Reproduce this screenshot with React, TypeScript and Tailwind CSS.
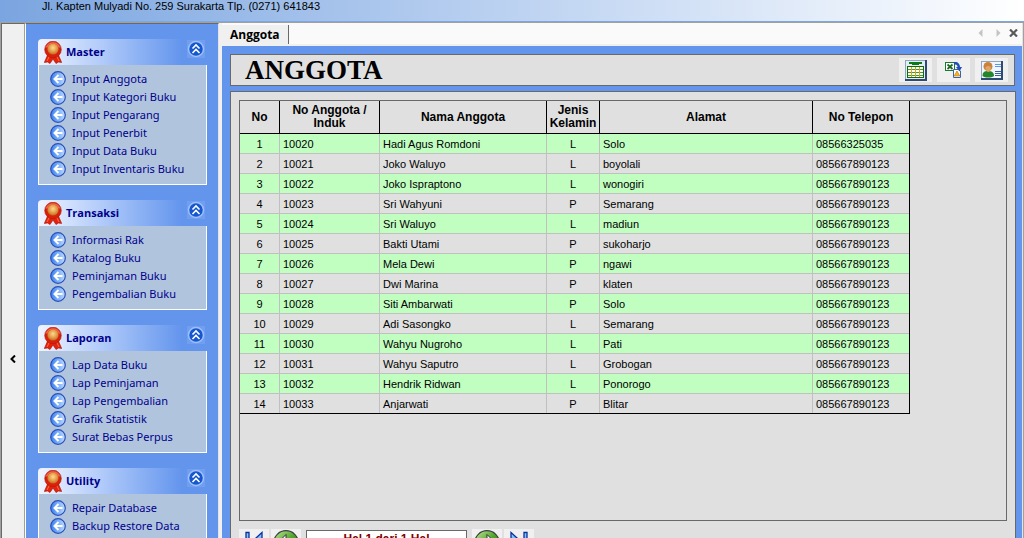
import type { ReactNode } from 'react';

interface Member {
  id: string;
  name: string;
  gender: 'L' | 'P';
  address: string;
  phone: string;
}

const MENU_GROUPS = [
  {
    title: 'Master',
    items: [
      'Input Anggota',
      'Input Kategori Buku',
      'Input Pengarang',
      'Input Penerbit',
      'Input Data Buku',
      'Input Inventaris Buku',
    ],
  },
  {
    title: 'Transaksi',
    items: ['Informasi Rak', 'Katalog Buku', 'Peminjaman Buku', 'Pengembalian Buku'],
  },
  {
    title: 'Laporan',
    items: [
      'Lap Data Buku',
      'Lap Peminjaman',
      'Lap Pengembalian',
      'Grafik Statistik',
      'Surat Bebas Perpus',
    ],
  },
  {
    title: 'Utility',
    items: ['Repair Database', 'Backup Restore Data'],
  },
];

const MEMBERS: Member[] = [
  { id: '10020', name: 'Hadi Agus Romdoni', gender: 'L', address: 'Solo', phone: '08566325035' },
  { id: '10021', name: 'Joko Waluyo', gender: 'L', address: 'boyolali', phone: '085667890123' },
  { id: '10022', name: 'Joko Ispraptono', gender: 'L', address: 'wonogiri', phone: '085667890123' },
  { id: '10023', name: 'Sri Wahyuni', gender: 'P', address: 'Semarang', phone: '085667890123' },
  { id: '10024', name: 'Sri Waluyo', gender: 'L', address: 'madiun', phone: '085667890123' },
  { id: '10025', name: 'Bakti Utami', gender: 'P', address: 'sukoharjo', phone: '085667890123' },
  { id: '10026', name: 'Mela Dewi', gender: 'P', address: 'ngawi', phone: '085667890123' },
  { id: '10027', name: 'Dwi Marina', gender: 'P', address: 'klaten', phone: '085667890123' },
  { id: '10028', name: 'Siti Ambarwati', gender: 'P', address: 'Solo', phone: '085667890123' },
  { id: '10029', name: 'Adi Sasongko', gender: 'L', address: 'Semarang', phone: '085667890123' },
  { id: '10030', name: 'Wahyu Nugroho', gender: 'L', address: 'Pati', phone: '085667890123' },
  { id: '10031', name: 'Wahyu Saputro', gender: 'L', address: 'Grobogan', phone: '085667890123' },
  { id: '10032', name: 'Hendrik Ridwan', gender: 'L', address: 'Ponorogo', phone: '085667890123' },
  { id: '10033', name: 'Anjarwati', gender: 'P', address: 'Blitar', phone: '085667890123' },
];

const App = () => {
  return (
    <div className="flex h-screen flex-col overflow-hidden bg-[#f0f0f0] font-['Liberation_Sans',sans-serif] text-[11px] text-black">
      {/* shared gradients for the small icons */}
      <svg className="absolute h-0 w-0" aria-hidden="true">
        <defs>
          <radialGradient id="medal-face" cx="0.5" cy="0.4" r="0.6">
            <stop offset="0" stopColor="#ffd98a" />
            <stop offset="0.6" stopColor="#e09a4a" />
            <stop offset="1" stopColor="#c8641e" />
          </radialGradient>
          <linearGradient id="bullet-face" x1="0" y1="0" x2="1" y2="0">
            <stop offset="0" stopColor="#3b80ee" />
            <stop offset="0.55" stopColor="#7fb2fb" />
            <stop offset="1" stopColor="#c4dbff" />
          </linearGradient>
          <linearGradient id="green-face" x1="0" y1="0" x2="1" y2="1">
            <stop offset="0" stopColor="#c3e89b" />
            <stop offset="0.5" stopColor="#4fa52c" />
            <stop offset="1" stopColor="#1d6a10" />
          </linearGradient>
          <linearGradient id="nav-face" x1="0" y1="0" x2="0" y2="1">
            <stop offset="0" stopColor="#8fd0ff" />
            <stop offset="1" stopColor="#2f86e8" />
          </linearGradient>
        </defs>
      </svg>

      <header className="h-[22px] shrink-0 border-b border-[#7ba7e3] bg-linear-to-r from-[#7ba5e0] to-white pl-[42px]">
        <p className="leading-3">Jl. Kapten Mulyadi No. 259 Surakarta Tlp. (0271) 641843</p>
      </header>

      <div className="flex min-h-0 flex-1 border-x border-t border-[#a0a0a0]">
        <button
          type="button"
          aria-label="Sembunyikan menu"
          className="flex w-6 shrink-0 items-center justify-center border-t border-r border-l border-t-[#696969] border-r-[#a0a0a0] border-l-[#696969] bg-[#f0f0f0] pt-[156px]"
        >
          <svg width="6" height="8" viewBox="0 0 6 8">
            <path d="M5 0.5 1.5 4 5 7.5" fill="none" stroke="#000" strokeWidth="2" />
          </svg>
        </button>

        <nav className="flex w-[194px] shrink-0 flex-col gap-[15px] overflow-hidden border-t border-r border-l border-t-[#696969] border-r-[#e3e3e3] border-l-white bg-[#6495ed] pt-[15px] pr-[11px] pl-[12px]">
          {MENU_GROUPS.map(group => (
            <MenuGroup key={group.title} title={group.title} items={group.items} />
          ))}
        </nav>

        <main className="ml-px flex min-w-0 flex-1 flex-col border-r border-l-2 border-r-[#e3e3e3] border-l-[#f0f0f0] bg-[#6495ed]">
          <div className="flex h-[23px] shrink-0 items-end justify-between border-b-2 border-[#f0f0f0] bg-[#fafafa]">
            <button
              type="button"
              className="h-[19px] border-r border-[#696969] bg-[#f0f0f0] px-2 pt-px font-['Open_Sans',sans-serif] text-[12px] leading-[18px] font-bold"
            >
              Anggota
            </button>
            <div className="flex h-[22px] items-center gap-2 pr-1">
              <div className="flex gap-[13px]">
                <button type="button" aria-label="Tab sebelumnya">
                  <svg width="5" height="8" viewBox="0 0 5 8">
                    <path d="M4.500 0v8L0.500 4z" fill="#c4c4c4" />
                  </svg>
                </button>
                <button type="button" aria-label="Tab berikutnya">
                  <svg width="5" height="8" viewBox="0 0 5 8">
                    <path d="M0.500 0v8L4.500 4z" fill="#c4c4c4" />
                  </svg>
                </button>
              </div>
              <button type="button" aria-label="Tutup tab">
                <svg width="9" height="8" viewBox="0 0 9 8">
                  <path d="M1 0.500 8 7.500M8 0.500 1 7.500" stroke="#5a5a5a" strokeWidth="2.200" />
                </svg>
              </button>
            </div>
          </div>

          <div className="flex min-h-0 flex-1 flex-col gap-[5px] pt-2 pr-[6px] pl-2">
            <div className="mr-px flex h-8 shrink-0 items-center justify-between border border-[#696969] bg-[#e0e0e0] pr-[6px] pl-[14px]">
              <h1 className="font-['Liberation_Serif',serif] text-[27px] leading-[30px] font-bold">ANGGOTA</h1>
              <div className="flex gap-[5px]">
                <ToolButton label="Tampilkan tabel">
                  <SheetIcon />
                </ToolButton>
                <ToolButton label="Ekspor ke Excel">
                  <ExcelIcon />
                </ToolButton>
                <ToolButton label="Kartu anggota">
                  <CardIcon />
                </ToolButton>
              </div>
            </div>

            <section className="flex min-h-0 flex-1 flex-col gap-2 overflow-hidden border border-b-0 border-[#696969] bg-[#e0e0e0] px-2 pt-2">
              <div className="h-[421px] shrink-0 border border-[#696969]">
                <MemberTable members={MEMBERS} />
              </div>
              <Pager />
            </section>
          </div>
        </main>
      </div>
    </div>
  );
};

// Sidebar
const MenuGroup = ({ title, items }: { title: string; items: string[] }) => (
  <section className="shrink-0 font-['Noto_Sans',sans-serif] text-[11px] text-[#00008b]">
    <div className="flex h-[26px] items-center justify-between rounded-tl-sm bg-linear-to-r from-[#f0f4ff] to-[#6495ed] to-85% pr-[2px] pl-[6px]">
      <div className="flex items-center gap-1">
        <MedalIcon />
        <h2 className="font-['Open_Sans',sans-serif] font-bold">{title}</h2>
      </div>
      <button type="button" aria-label={`Ciutkan ${title}`} className="-mt-[6px]">
        <svg width="18" height="18" viewBox="0 0 18 18">
          <rect width="18" height="18" fill="#719ef0" />
          <circle cx="9" cy="9" r="7.500" fill="#1557d0" stroke="#9fc0fa" strokeWidth="1.500" />
          <path d="M5.500 8.500 9 5l3.500 3.500M5.500 13 9 9.500l3.500 3.500" fill="none" stroke="#fff" strokeWidth="1.600" />
        </svg>
      </button>
    </div>
    <ul className="border border-t-0 border-white bg-[#b0c4de] pt-[5px] pb-[6px] pl-[11px]">
      {items.map(item => (
        <li key={item}>
          <a href="#" className="flex h-[18px] items-center gap-[6px] whitespace-nowrap">
            <BulletIcon />
            {item}
          </a>
        </li>
      ))}
    </ul>
  </section>
);

const MedalIcon = () => (
  <svg width="18" height="23" viewBox="0 0 18 23">
    <path d="M4 13 0.300 21.500l3.200-.5L6 22.500 9 18l3 4.500 2.500-1.500 3.200.5L14 13z" fill="#e8220a" stroke="#9c1405" strokeWidth="0.600" />
    <path d="M5.500 15 3 20M12.500 15l2.500 5" stroke="#ff6a4a" strokeWidth="1" />
    <circle cx="9" cy="8.500" r="8.300" fill="#d9200b" stroke="#a81a08" strokeWidth="0.600" />
    <path d="M2.500 6.500A7 7 0 0 1 15.500 6.500" fill="none" stroke="#f5694b" strokeWidth="1.500" />
    <circle cx="9" cy="8" r="5.600" fill="url(#medal-face)" />
  </svg>
);

const BulletIcon = () => (
  <svg width="16" height="16" viewBox="0 0 16 16">
    <circle cx="8" cy="8" r="7.300" fill="url(#bullet-face)" stroke="#2a4fb8" strokeWidth="1.200" />
    <path d="M12.500 8H5M8.500 4 4.500 8l4 4" fill="none" stroke="#fff" strokeWidth="2" />
  </svg>
);

// Title bar tools
const ToolButton = ({ label, children }: { label: string; children: ReactNode }) => (
  <button type="button" aria-label={label} className="flex h-6 w-[33px] items-center justify-center bg-[#f0f0f0]">
    {children}
  </button>
);

const SheetIcon = () => (
  <svg width="22" height="21" viewBox="0 0 22 21">
    <rect x="0.500" y="0.500" width="21" height="20" fill="#e4ecf6" stroke="#8fa5c4" />
    <path d="M21 0v20H0" fill="none" stroke="#2c4a72" strokeWidth="2" />
    <path d="M4 2h13v2h-3v1H7V4H4z" fill="#0b7a12" />
    <rect x="2.500" y="6.500" width="16" height="11" fill="#fffce8" stroke="#0b6a12" />
    <path d="M3 9.500h15M3 12.500h15M3 15.500h15" stroke="#3f9a3f" />
    <path d="M6.500 7v10M10.500 7v10M14.500 7v10" stroke="#d9a030" />
  </svg>
);

const ExcelIcon = () => (
  <svg width="17" height="17" viewBox="0 0 17 17">
    <rect x="0.500" y="0.500" width="9" height="8" fill="#fff" stroke="#1d7a2c" />
    <path d="m2.500 2.500 5 4.500M7.500 2.500l-5 4.500" stroke="#176b25" strokeWidth="1.700" />
    <path d="M8.500 7.500v8h7V9l-2-1.500z" fill="#fff" stroke="#3b63a8" />
    <path d="M9 1.500c3-1 5 1 5 4.500" fill="none" stroke="#1e50b8" strokeWidth="2.500" />
    <path d="M11 5h6l-2.500 4.500z" fill="#1e50b8" />
    <path d="m12 9 2.800 5H9.200z" fill="#f5b52a" stroke="#c77b08" strokeWidth="0.700" />
  </svg>
);

const CardIcon = () => (
  <svg width="22" height="19" viewBox="0 0 22 19">
    <rect x="0.500" y="0.500" width="21" height="18" fill="#f1f6fd" stroke="#8fa5c4" />
    <path d="M21 0v18H0" fill="none" stroke="#2c4a72" strokeWidth="2" />
    <path d="M1.500 15c0-4 2-5 5.500-5s6 1 6 5c-3 2-8.500 2-11.500 0z" fill="#23862a" />
    <circle cx="7" cy="5.500" r="4.500" fill="#c98338" />
    <path d="M4.500 6.500c0 3 1.500 4.500 2.700 4.500S10 9.500 10 6.500C8.500 4.500 6 4.500 4.500 6.500z" fill="#e0a468" />
    <path d="M14 3.500h6M14 5.500h6" stroke="#5f94e6" strokeWidth="1.200" />
    <path d="M14 10.500h6M14 12.500h6M14 14.500h6" stroke="#3c5f9e" strokeWidth="1.200" />
  </svg>
);

// Member list
const MemberTable = ({ members }: { members: Member[] }) => (
  <table className="table-fixed w-[670px] border-separate border-spacing-0 border-r border-b border-black leading-[13px]">
    <colgroup>
      <col className="w-10" />
      <col className="w-[100px]" />
      <col className="w-[167px]" />
      <col className="w-[53px]" />
      <col className="w-[213px]" />
      <col />
    </colgroup>
    <thead className="text-[12px]">
      <tr className="h-[33px] [&>th]:border-b [&>th]:border-black [&>th]:p-0 [&>th:not(:last-child)]:border-r">
        <th>No</th>
        <th>No Anggota /<br />Induk</th>
        <th>Nama Anggota</th>
        <th>Jenis<br />Kelamin</th>
        <th>Alamat</th>
        <th>No Telepon</th>
      </tr>
    </thead>
    <tbody>
      {members.map((member, index) => (
        <tr
          key={member.id}
          className="h-5 odd:bg-[#c0ffc0] last:h-[19px] [&>td]:border-[#c0c0c0] [&>td]:px-[3px] [&>td]:pt-[2px] [&>td]:pb-0 [&>td:not(:last-child)]:border-r [&:not(:last-child)>td]:border-b"
        >
          <td className="text-center">{index + 1}</td>
          <td>{member.id}</td>
          <td>{member.name}</td>
          <td className="text-center">{member.gender}</td>
          <td>{member.address}</td>
          <td>{member.phone}</td>
        </tr>
      ))}
    </tbody>
  </table>
);

const PagerButton = ({ label, children }: { label: string; children: ReactNode }) => (
  <button type="button" aria-label={label} className="flex h-[30px] w-[30px] justify-center bg-[#f0f0f0] pt-px">
    {children}
  </button>
);

const Pager = () => (
  <div className="flex shrink-0 items-start gap-[2px]">
    <PagerButton label="Halaman pertama">
      <svg width="18" height="26" viewBox="0 0 18 26">
        <path d="M1 2.500h3v21H1zM17 2.500v21L5.500 13z" fill="url(#nav-face)" stroke="#0b2f9c" strokeWidth="1.300" />
      </svg>
    </PagerButton>
    <PagerButton label="Halaman sebelumnya">
      <svg width="26" height="26" viewBox="0 0 26 26">
        <circle cx="13" cy="13" r="12.300" fill="url(#green-face)" stroke="#3c3c3c" strokeWidth="1.200" />
        <path d="M13 4.500v5h7v7h-7v5L4.500 13z" fill="#fff" stroke="#303030" />
      </svg>
    </PagerButton>
    <input
      type="text"
      readOnly
      aria-label="Halaman"
      value="Hal 1 dari 1 Hal"
      className="mx-[3px] mt-px h-[18px] w-[161px] border border-[#696969] bg-white text-center text-[12px] leading-4 font-bold text-[#800000]"
    />
    <PagerButton label="Halaman berikutnya">
      <svg width="26" height="26" viewBox="0 0 26 26">
        <circle cx="13" cy="13" r="12.300" fill="url(#green-face)" stroke="#3c3c3c" strokeWidth="1.200" />
        <path d="M13 4.500v5H6v7h7v5l8.500-8.500z" fill="#fff" stroke="#303030" />
      </svg>
    </PagerButton>
    <PagerButton label="Halaman terakhir">
      <svg width="18" height="26" viewBox="0 0 18 26">
        <path d="M17 2.500h-3v21h3zM1 2.500v21L12.500 13z" fill="url(#nav-face)" stroke="#0b2f9c" strokeWidth="1.300" />
      </svg>
    </PagerButton>
  </div>
);

export default App;
